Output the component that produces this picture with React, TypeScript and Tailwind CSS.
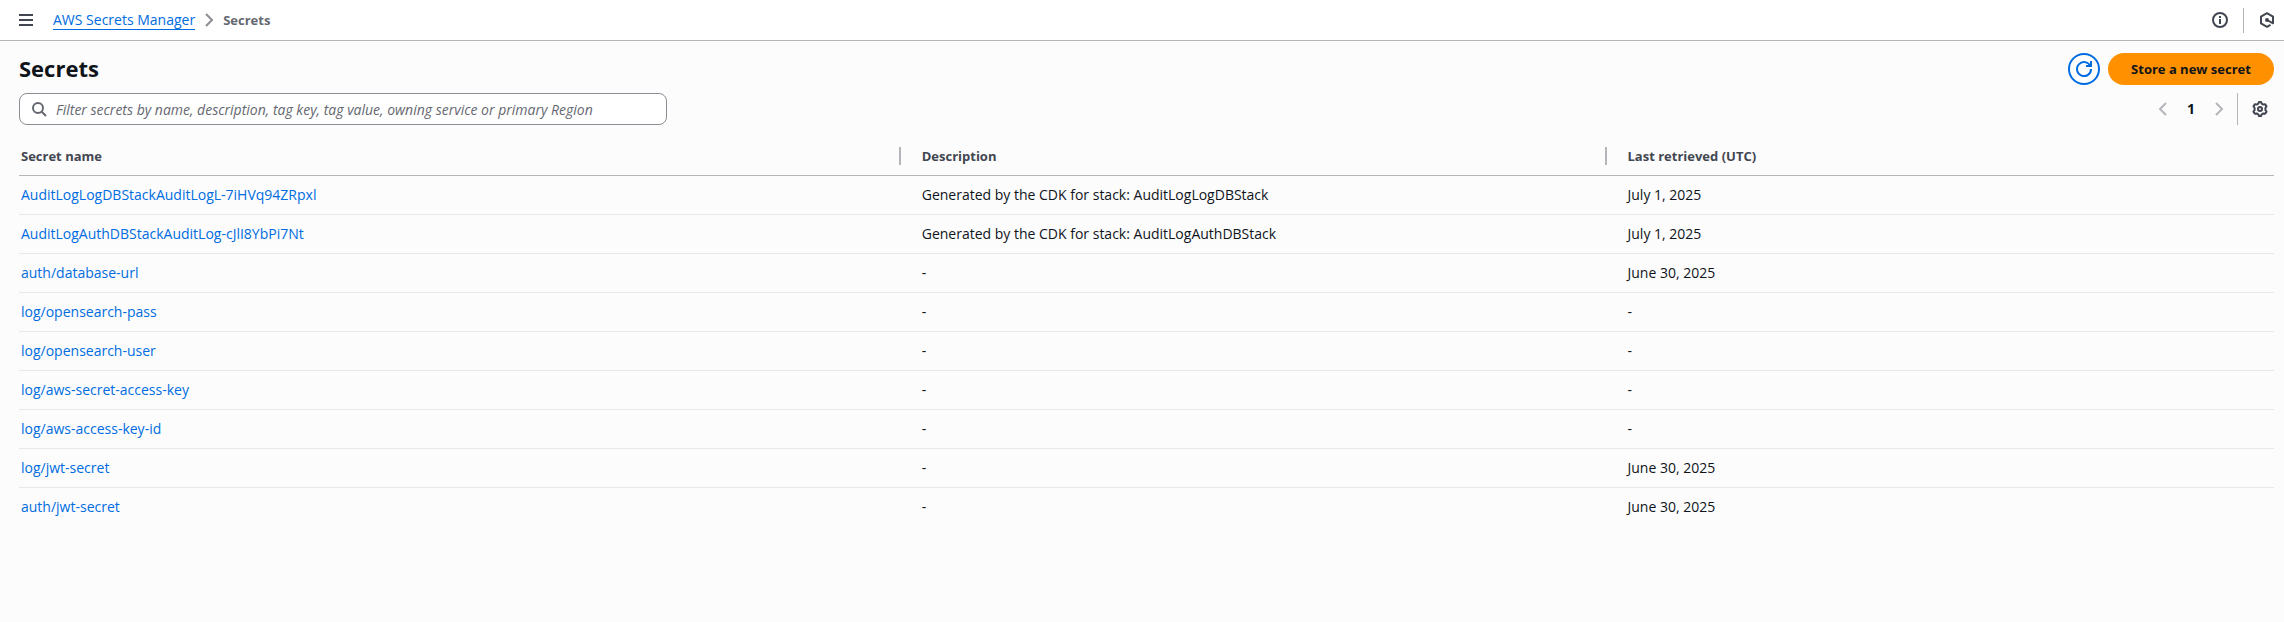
import type { ReactNode } from "react";

type Secret = { name: string; description: string; retrieved: string };

const secrets: Secret[] = [
  { name: "AuditLogLogDBStackAuditLogL-7iHVq94ZRpxl", description: "Generated by the CDK for stack: AuditLogLogDBStack", retrieved: "July 1, 2025" },
  { name: "AuditLogAuthDBStackAuditLog-cJlI8YbPi7Nt", description: "Generated by the CDK for stack: AuditLogAuthDBStack", retrieved: "July 1, 2025" },
  { name: "auth/database-url", description: "-", retrieved: "June 30, 2025" },
  { name: "log/opensearch-pass", description: "-", retrieved: "-" },
  { name: "log/opensearch-user", description: "-", retrieved: "-" },
  { name: "log/aws-secret-access-key", description: "-", retrieved: "-" },
  { name: "log/aws-access-key-id", description: "-", retrieved: "-" },
  { name: "log/jwt-secret", description: "-", retrieved: "June 30, 2025" },
  { name: "auth/jwt-secret", description: "-", retrieved: "June 30, 2025" },
];

function Icon({ children, className = "" }: { children: ReactNode; className?: string }) {
  return (
    <svg viewBox="0 0 16 16" fill="none" stroke="currentColor" strokeWidth="2" className={`size-4 shrink-0 ${className}`} aria-hidden="true">
      {children}
    </svg>
  );
}

function TopBar() {
  return (
    <header className="flex h-[41px] items-center justify-between border-b border-[#b4b4bb] bg-white pr-[9px] pl-[18px]">
      <div className="flex items-center">
        <button type="button" aria-label="Open navigation" className="text-[#424650]">
          <Icon>
            <path d="M1 3h14M1 8h14M1 13h14" />
          </Icon>
        </button>
        <nav aria-label="Breadcrumb" className="ml-[19px]">
          <ol className="flex items-center">
            <li>
              <a href="#" className="block border-b border-[#006ce0] text-[#006ce0] leading-[19px]">AWS Secrets Manager</a>
            </li>
            <li className="mx-1.5 text-[#8c8c94]">
              <Icon>
                <path d="m5 2 6 6-6 6" />
              </Icon>
            </li>
            <li className="text-[13px] font-bold text-[#656871]" aria-current="page">Secrets</li>
          </ol>
        </nav>
      </div>
      <div className="flex items-center text-[#424650]">
        <button type="button" aria-label="Info">
          <Icon>
            <circle cx="8" cy="8" r="7" />
            <path d="M8 12V7M8 6V4" />
          </Icon>
        </button>
        <span className="mx-[15px] h-[25px] w-px bg-[#b4b4bb]" />
        <button type="button" aria-label="Amazon Q">
          <Icon>
            <path d="M14 11.500V4.600L8 1.200 2 4.600v6.800l6 3.400 3.500-2" />
            <path d="m8 8 6.500 3.700" />
            <circle cx="8" cy="8" r="1" />
          </Icon>
        </button>
      </div>
    </header>
  );
}

function Pagination() {
  return (
    <div className="flex items-center">
      <button type="button" aria-label="Previous page" className="text-[#b4b4bb]">
        <Icon>
          <path d="m11 2-6 6 6 6" />
        </Icon>
      </button>
      <button type="button" aria-current="page" className="w-10 text-center font-bold">1</button>
      <button type="button" aria-label="Next page" className="text-[#b4b4bb]">
        <Icon>
          <path d="m5 2 6 6-6 6" />
        </Icon>
      </button>
      <span className="ml-2.5 h-8 w-px bg-[#b4b4bb]" />
      <button type="button" aria-label="Preferences" className="mr-1.5 ml-3.5 text-[#424650]">
        <Icon>
          <path
            strokeLinejoin="round"
            d="M6.300 2.700 7 1h2l.7 1.700 1.600.9 1.900-.3 1.300 2.100L13.400 7v2l1.100 1.600-1.300 2.100-1.900-.3-1.600.9L9 15H7l-.7-1.700-1.600-.9-1.900.3-1.300-2.100L2.600 9V7L1.500 5.400l1.300-2.100 1.900.3z"
          />
          <circle cx="8" cy="8" r="2" />
        </Icon>
      </button>
    </div>
  );
}

function SecretsTable() {
  return (
    <table className="mt-[11px] w-full table-fixed text-left">
      <colgroup>
        <col className="w-[39.1%]" />
        <col className="w-[31.3%]" />
        <col />
      </colgroup>
      <thead>
        <tr className="h-[39px] border-b border-[#b4b4bb] text-[13px] text-[#424650]">
          <th scope="col" className="p-0 pt-0.5 pl-0.5 font-bold">
            <div className="border-r-2 border-[#b4b4bb] leading-[18px]">Secret name</div>
          </th>
          <th scope="col" className="p-0 pt-0.5 pl-[21px] font-bold">
            <div className="border-r-2 border-[#b4b4bb] leading-[18px]">Description</div>
          </th>
          <th scope="col" className="p-0 pt-0.5 pl-[21px] font-bold">
            <div className="leading-[18px]">Last retrieved (UTC)</div>
          </th>
        </tr>
      </thead>
      <tbody>
        {secrets.map((s) => (
          <tr key={s.name} className="h-[39px] border-b border-[#e7e7ed] last:border-b-0">
            <td className="p-0 pl-0.5">
              <a href="#" className="text-[#006ce0]">{s.name}</a>
            </td>
            <td className="p-0 pl-[21px]">{s.description}</td>
            <td className="p-0 pl-[21px]">{s.retrieved}</td>
          </tr>
        ))}
      </tbody>
    </table>
  );
}

export default function App() {
  return (
    <div className="min-h-screen bg-[#fcfcfd] font-['Open_Sans',sans-serif] text-sm font-medium text-[#0f141a]">
      <TopBar />
      <main className="pt-3 pr-2.5 pl-[19px]">
        <div className="flex h-8 items-center justify-between">
          <h1 className="text-[22px] font-bold">Secrets</h1>
          <div className="flex gap-2">
            <button type="button" aria-label="Refresh" className="flex size-8 items-center justify-center rounded-full border-2 border-[#006ce0] bg-white text-[#006ce0]">
              <Icon>
                <path d="M10 5h5V0" />
                <path d="M15 8a7 7 0 1 1-.700-3" />
              </Icon>
            </button>
            <button type="button" className="h-8 min-w-[166px] rounded-full bg-[#ff9000] px-5 text-[13px] font-bold">Store a new secret</button>
          </div>
        </div>
        <div className="mt-2 flex items-center justify-between">
          <div className="flex h-8 w-[648px] items-center rounded-lg border border-[#8c8c94] bg-white px-[11px]">
            <Icon className="text-[#656871]">
              <circle cx="7" cy="7" r="5" />
              <path d="m15 15-4.500-4.500" />
            </Icon>
            <input
              type="search"
              aria-label="Filter secrets"
              placeholder="Filter secrets by name, description, tag key, tag value, owning service or primary Region"
              className="ml-[9px] h-full min-w-0 flex-1 bg-transparent outline-none placeholder:text-[#656871] placeholder:italic"
            />
          </div>
          <Pagination />
        </div>
        <SecretsTable />
      </main>
    </div>
  );
}
